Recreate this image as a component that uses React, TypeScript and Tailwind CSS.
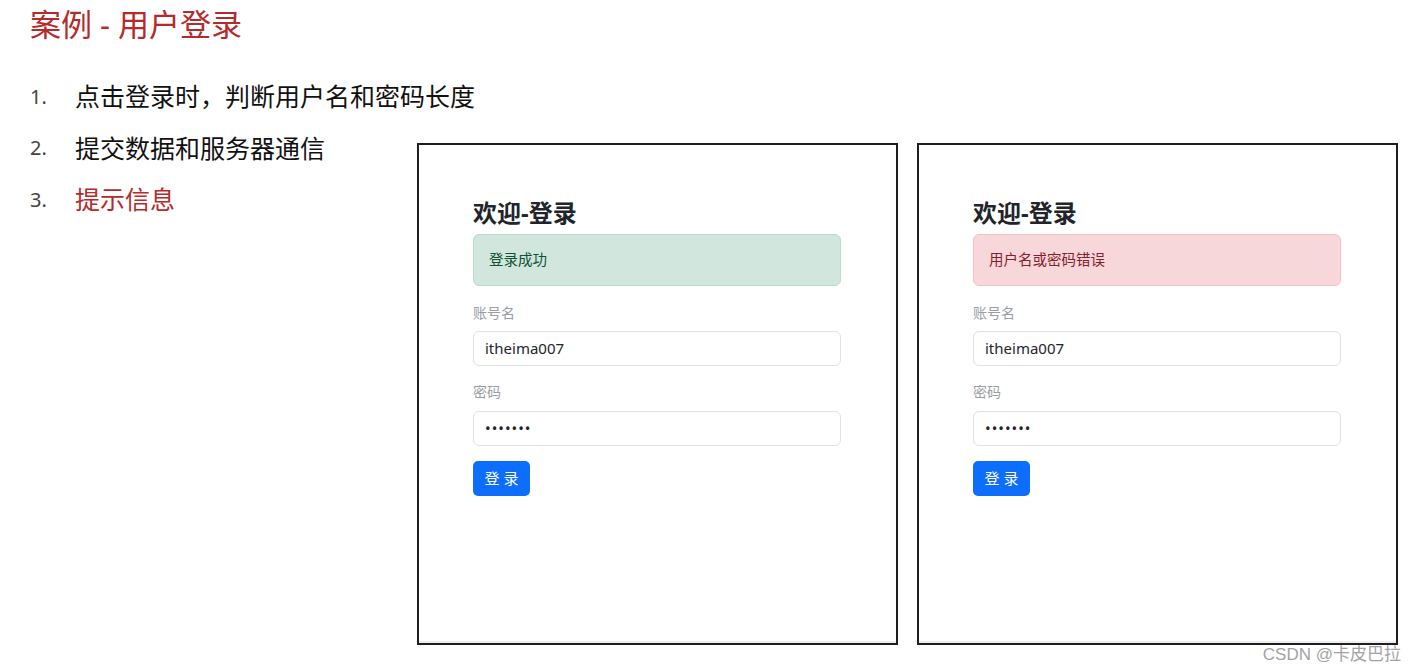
import React from 'react';

const CJK = '"Noto Sans", "Noto Sans CJK SC", sans-serif';

function LoginCard({ ok }: { ok: boolean }) {
  return (
    <div className="w-[481px] h-[502px] border-2 border-[#1f1f1f] bg-white flex flex-col">
      <div className="pl-[54px] pr-[54px] pt-[53px] flex-1">
        <h2 className="text-[24px] leading-[30px] font-bold text-[#212529]">欢迎-登录</h2>
        <div
          className={
            ok
              ? 'mt-[6px] w-[368px] h-[52px] flex items-center px-[15px] rounded-[6px] border border-[#badbcc] bg-[#d1e7dd] text-[#0f5132] text-[14.5px]'
              : 'mt-[6px] w-[368px] h-[52px] flex items-center px-[15px] rounded-[6px] border border-[#f5c2c7] bg-[#f8d7da] text-[#842029] text-[14.5px]'
          }
        >
          {ok ? '登录成功' : '用户名或密码错误'}
        </div>
        <div className="mt-[17px] text-[14px] leading-[20px] text-[#9a9ea3]">账号名</div>
        <div className="mt-[8px] w-[368px] h-[35px] flex items-center px-[11px] rounded-[6px] border border-[#dee2e6] text-[15px] text-[#212529]">
          itheima007
        </div>
        <div className="mt-[16px] text-[14px] leading-[20px] text-[#9a9ea3]">密码</div>
        <div className="mt-[9px] w-[368px] h-[35px] flex items-center px-[11px] rounded-[6px] border border-[#dee2e6] text-[15px] tracking-[1px] text-[#212529]">
          •••••••
        </div>
        <button className="mt-[15px] w-[57px] h-[35px] rounded-[5px] bg-[#0d6efd] text-white text-[15px]">
          登 录
        </button>
      </div>
      <div className="h-[2px] bg-[#eceef1]" />
    </div>
  );
}

export default function App() {
  return (
    <div className="relative w-[1417px] h-[672px] bg-white overflow-hidden" style={{ fontFamily: CJK }}>
      <h1 className="pl-[30px] pt-[6px] text-[31px] leading-[36px] text-[#b52a2a]">案例 - 用户登录</h1>
      <div className="flex">
        <ol className="w-[417px] shrink-0 pl-[30px] mt-[29px]">
          {[
            { n: '1.', t: '点击登录时，判断用户名和密码长度', red: false },
            { n: '2.', t: '提交数据和服务器通信', red: false },
            { n: '3.', t: '提示信息', red: true },
          ].map((it) => (
            <li key={it.n} className="flex h-[51.5px] items-center text-[25px] whitespace-nowrap">
              <span className="w-[45px] shrink-0 text-[20px] text-[#444]">{it.n}</span>
              <span className={it.red ? 'text-[#b52a2a]' : 'text-[#111]'}>{it.t}</span>
            </li>
          ))}
        </ol>
        <div className="flex gap-[19px] mt-[101px]">
          <LoginCard ok />
          <LoginCard ok={false} />
        </div>
      </div>
      <div
        className="absolute right-[16px] bottom-[7px] text-[17px] leading-[20px] text-[#a3a3a3]"
        style={{ fontFamily: '"Liberation Sans", "Noto Sans CJK SC", sans-serif' }}
      >
        CSDN @卡皮巴拉
      </div>
    </div>
  );
}
